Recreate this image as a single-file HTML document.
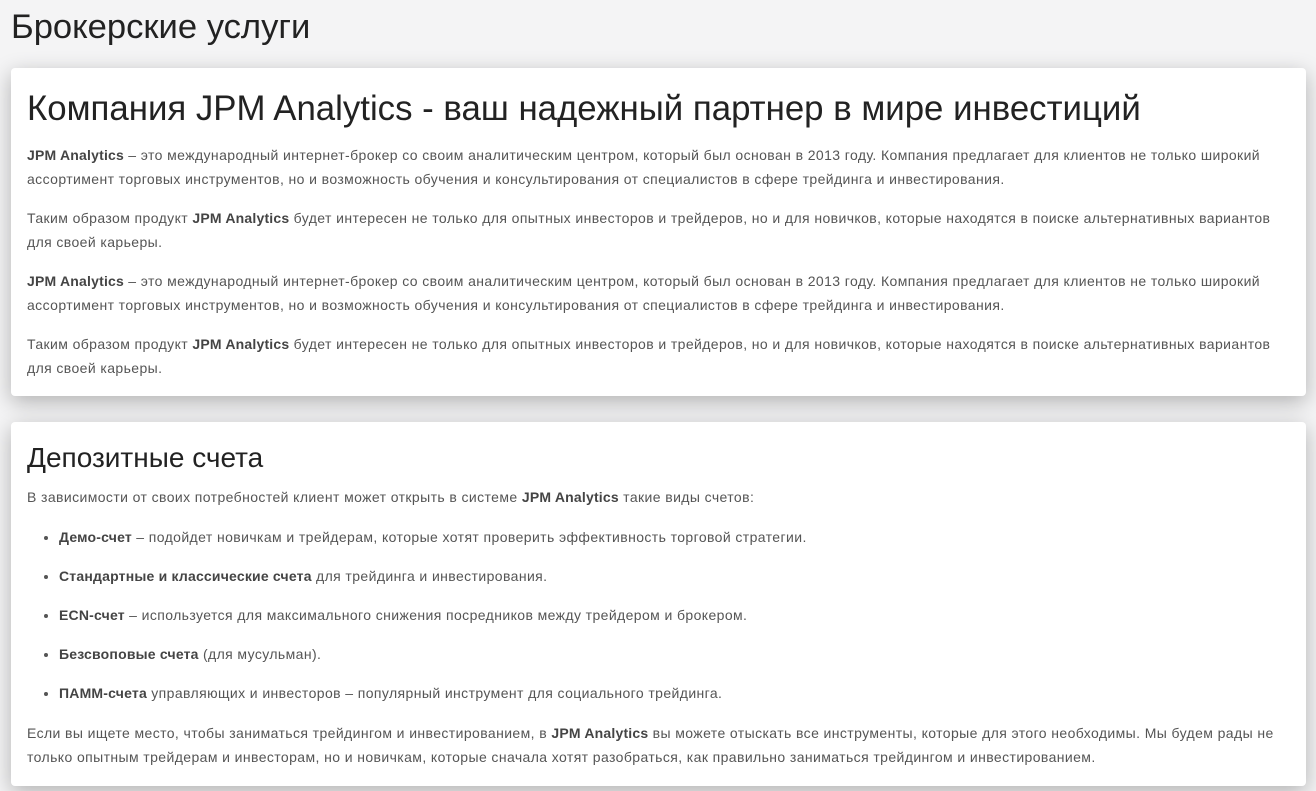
<!DOCTYPE html>
<html><head><meta charset="utf-8"><style>
html,body{margin:0;padding:0}
body{width:1316px;height:791px;overflow:hidden;background:#f4f4f5;font-family:"Liberation Sans",sans-serif;color:#555;position:relative}
.t{position:absolute;left:11px;top:7px;font-size:34.6px;color:#222;margin:0;font-weight:normal;line-height:40px}
.card{position:absolute;left:11px;width:1295px;background:#fff;border-radius:4px;box-shadow:0 6px 22px rgba(0,0,0,.28);box-sizing:border-box;padding:0 16px}
.c1{top:68px;height:328px}
.c2{top:422px;height:364px}
h1{font-weight:normal;color:#222;font-size:34.8px;margin:0;position:absolute;left:16px;top:19px;line-height:44px;white-space:nowrap}
h2{font-weight:normal;color:#222;font-size:28px;margin:0;position:absolute;left:16px;top:18px;line-height:36px}
p{font-size:14px;letter-spacing:.4px;line-height:24px;margin:0;position:absolute;left:16px;right:0;white-space:nowrap}
b{color:#444;letter-spacing:.2px}
ul{margin:0;padding-left:32px;position:absolute;left:16px;right:20px;font-size:14px;letter-spacing:.4px;line-height:24px}
li{height:39px}
</style></head><body>
<div class="t">Брокерские услуги</div>
<div class="card c1">
<h1>Компания JPM Analytics - ваш надежный партнер в мире инвестиций</h1>
<p style="top:75px"><b>JPM Analytics</b> – это международный интернет-брокер со своим аналитическим центром, который был основан в 2013 году. Компания предлагает для клиентов не только широкий<br>ассортимент торговых инструментов, но и возможность обучения и консультирования от специалистов в сфере трейдинга и инвестирования.</p>
<p style="top:138px">Таким образом продукт <b>JPM Analytics</b> будет интересен не только для опытных инвесторов и трейдеров, но и для новичков, которые находятся в поиске альтернативных вариантов<br>для своей карьеры.</p>
<p style="top:201px"><b>JPM Analytics</b> – это международный интернет-брокер со своим аналитическим центром, который был основан в 2013 году. Компания предлагает для клиентов не только широкий<br>ассортимент торговых инструментов, но и возможность обучения и консультирования от специалистов в сфере трейдинга и инвестирования.</p>
<p style="top:264px">Таким образом продукт <b>JPM Analytics</b> будет интересен не только для опытных инвесторов и трейдеров, но и для новичков, которые находятся в поиске альтернативных вариантов<br>для своей карьеры.</p>
</div>
<div class="card c2">
<h2>Депозитные счета</h2>
<p style="top:63px">В зависимости от своих потребностей клиент может открыть в системе <b>JPM Analytics</b> такие виды счетов:</p>
<ul style="top:103px">
<li><b>Демо-счет</b> – подойдет новичкам и трейдерам, которые хотят проверить эффективность торговой стратегии.</li>
<li><b>Стандартные и классические счета</b> для трейдинга и инвестирования.</li>
<li><b>ECN-счет</b> – используется для максимального снижения посредников между трейдером и брокером.</li>
<li><b>Безсвоповые счета</b> (для мусульман).</li>
<li><b>ПАММ-счета</b> управляющих и инвесторов – популярный инструмент для социального трейдинга.</li>
</ul>
<p style="top:299px">Если вы ищете место, чтобы заниматься трейдингом и инвестированием, в <b>JPM Analytics</b> вы можете отыскать все инструменты, которые для этого необходимы. Мы будем рады не<br>только опытным трейдерам и инвесторам, но и новичкам, которые сначала хотят разобраться, как правильно заниматься трейдингом и инвестированием.</p>
</div>
</body></html>
